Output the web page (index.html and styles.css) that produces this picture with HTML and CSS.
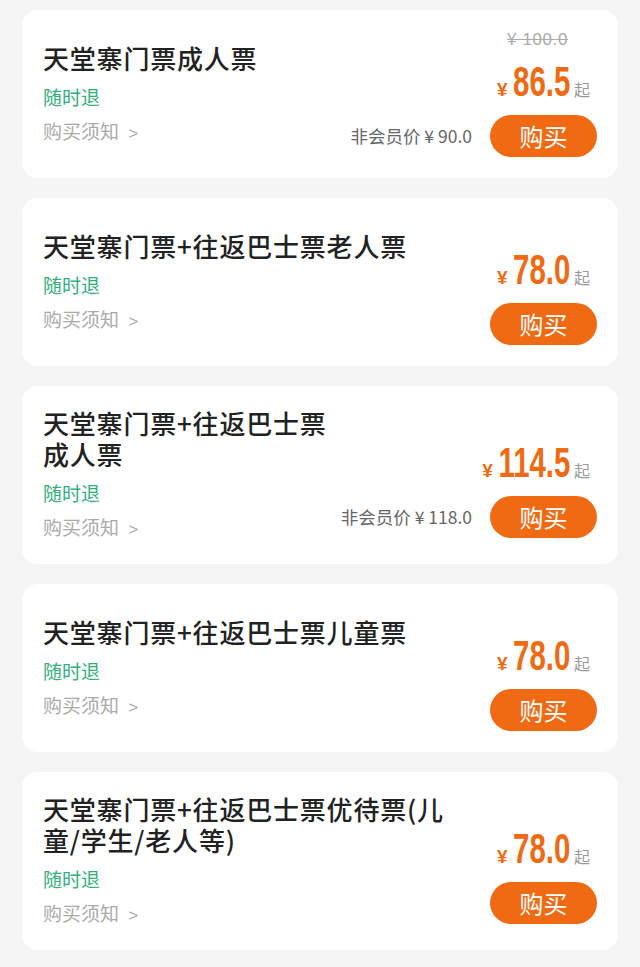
FILE: index.html
```html
<!DOCTYPE html>
<html lang="zh-CN">
<head>
    <meta charset="UTF-8">
    <meta name="viewport" content="width=device-width, initial-scale=1.0">
    <title>天堂寨门票</title>
    <link rel="stylesheet" href="styles.css">
</head>
<body>
    <div class="list">

        <div class="card">
            <div class="info">
                <div class="title">天堂寨门票成人票</div>
                <div class="refund">随时退</div>
                <div class="notice">购买须知 <span class="arrow">&gt;</span></div>
            </div>
            <div class="side">
                <div class="member">非会员价 ¥ 90.0</div>
                <div class="stack">
                    <div class="old">¥ 100.0</div>
                    <div class="price"><span class="num"><span class="yen">¥</span>86.5</span><span class="qi">起</span></div>
                    <button class="buy">购买</button>
                </div>
            </div>
        </div>

        <div class="card">
            <div class="info">
                <div class="title">天堂寨门票+往返巴士票老人票</div>
                <div class="refund">随时退</div>
                <div class="notice">购买须知 <span class="arrow">&gt;</span></div>
            </div>
            <div class="side">
                <div class="stack">
                    <div class="old hidden">¥ 0.0</div>
                    <div class="price"><span class="num"><span class="yen">¥</span>78.0</span><span class="qi">起</span></div>
                    <button class="buy">购买</button>
                </div>
            </div>
        </div>

        <div class="card">
            <div class="info">
                <div class="title">天堂寨门票+往返巴士票成人票</div>
                <div class="refund">随时退</div>
                <div class="notice">购买须知 <span class="arrow">&gt;</span></div>
            </div>
            <div class="side">
                <div class="member">非会员价 ¥ 118.0</div>
                <div class="stack">
                    <div class="old hidden">¥ 0.0</div>
                    <div class="price"><span class="num"><span class="yen">¥</span>114.5</span><span class="qi">起</span></div>
                    <button class="buy">购买</button>
                </div>
            </div>
        </div>

        <div class="card">
            <div class="info">
                <div class="title">天堂寨门票+往返巴士票儿童票</div>
                <div class="refund">随时退</div>
                <div class="notice">购买须知 <span class="arrow">&gt;</span></div>
            </div>
            <div class="side">
                <div class="stack">
                    <div class="old hidden">¥ 0.0</div>
                    <div class="price"><span class="num"><span class="yen">¥</span>78.0</span><span class="qi">起</span></div>
                    <button class="buy">购买</button>
                </div>
            </div>
        </div>

        <div class="card">
            <div class="info">
                <div class="title">天堂寨门票+往返巴士票优待票(儿童/学生/老人等)</div>
                <div class="refund">随时退</div>
                <div class="notice">购买须知 <span class="arrow">&gt;</span></div>
            </div>
            <div class="side">
                <div class="stack">
                    <div class="old hidden">¥ 0.0</div>
                    <div class="price"><span class="num"><span class="yen">¥</span>78.0</span><span class="qi">起</span></div>
                    <button class="buy">购买</button>
                </div>
            </div>
        </div>

    </div>
</body>
</html>
```

FILE: styles.css
```css
body {
    margin: 0;
    background-color: #f5f5f5;
    font-family: "Noto Sans CJK SC", "Noto Sans", sans-serif;
    color: #222;
}
.list {
    display: flex;
    flex-direction: column;
    gap: 20px;
    padding: 10px 22px;
}
.card {
    display: flex;
    align-items: center;
    justify-content: space-between;
    background-color: #fff;
    border-radius: 16px;
    padding: 21px;
}
.info {
    flex: 1;
    max-width: 410px;
    min-width: 0;
}
.title {
    font-size: 26px;
    line-height: 31px;
    font-weight: 500;
    letter-spacing: 0.8px;
    color: #222;
}
.refund {
    margin-top: 11px;
    font-size: 19px;
    line-height: 26px;
    color: #2fb07c;
}
.notice {
    margin-top: 8px;
    font-size: 19px;
    line-height: 26px;
    color: #aaa;
}
.arrow {
    margin-left: 5px;
    font-family: "Liberation Sans", sans-serif;
    font-size: 17px;
}
.side {
    display: flex;
    align-items: flex-end;
    gap: 18px;
    margin-left: 10px;
    flex-shrink: 0;
}
.member {
    font-size: 17.5px;
    line-height: 42px;
    color: #666;
    white-space: nowrap;
}
.stack {
    display: flex;
    flex-direction: column;
    align-items: flex-end;
    width: 107px;
}
.old {
    margin-right: 29px;
    font-family: "Liberation Sans", sans-serif;
    font-size: 17px;
    line-height: 18px;
    letter-spacing: 0.6px;
    color: #aaa;
    text-decoration: line-through;
}
.hidden {
    visibility: hidden;
}
.price {
    display: flex;
    align-items: baseline;
    margin-top: 13px;
    margin-right: 7px;
    height: 40px;
    line-height: 40px;
    color: #ef6a12;
    white-space: nowrap;
}
/* digits are squeezed to look like a condensed face */
.num {
    display: inline-block;
    font-family: "Liberation Sans", sans-serif;
    font-size: 42px;
    font-weight: bold;
    transform: scaleX(0.7);
    transform-origin: right center;
    margin-right: 4px;
}
.yen {
    display: inline-block;
    font-size: 19px;
    margin-right: 8px;
    transform: scaleX(1.43);
    transform-origin: right center;
}
.qi {
    font-size: 16px;
    color: #999;
}
.buy {
    margin-top: 13px;
    width: 107px;
    height: 42px;
    border: none;
    border-radius: 21px;
    background-color: #ef6a12;
    color: #fff;
    font-family: "Noto Sans CJK SC", sans-serif;
    font-size: 24px;
    line-height: 42px;
    padding: 0;
    cursor: pointer;
}
```
